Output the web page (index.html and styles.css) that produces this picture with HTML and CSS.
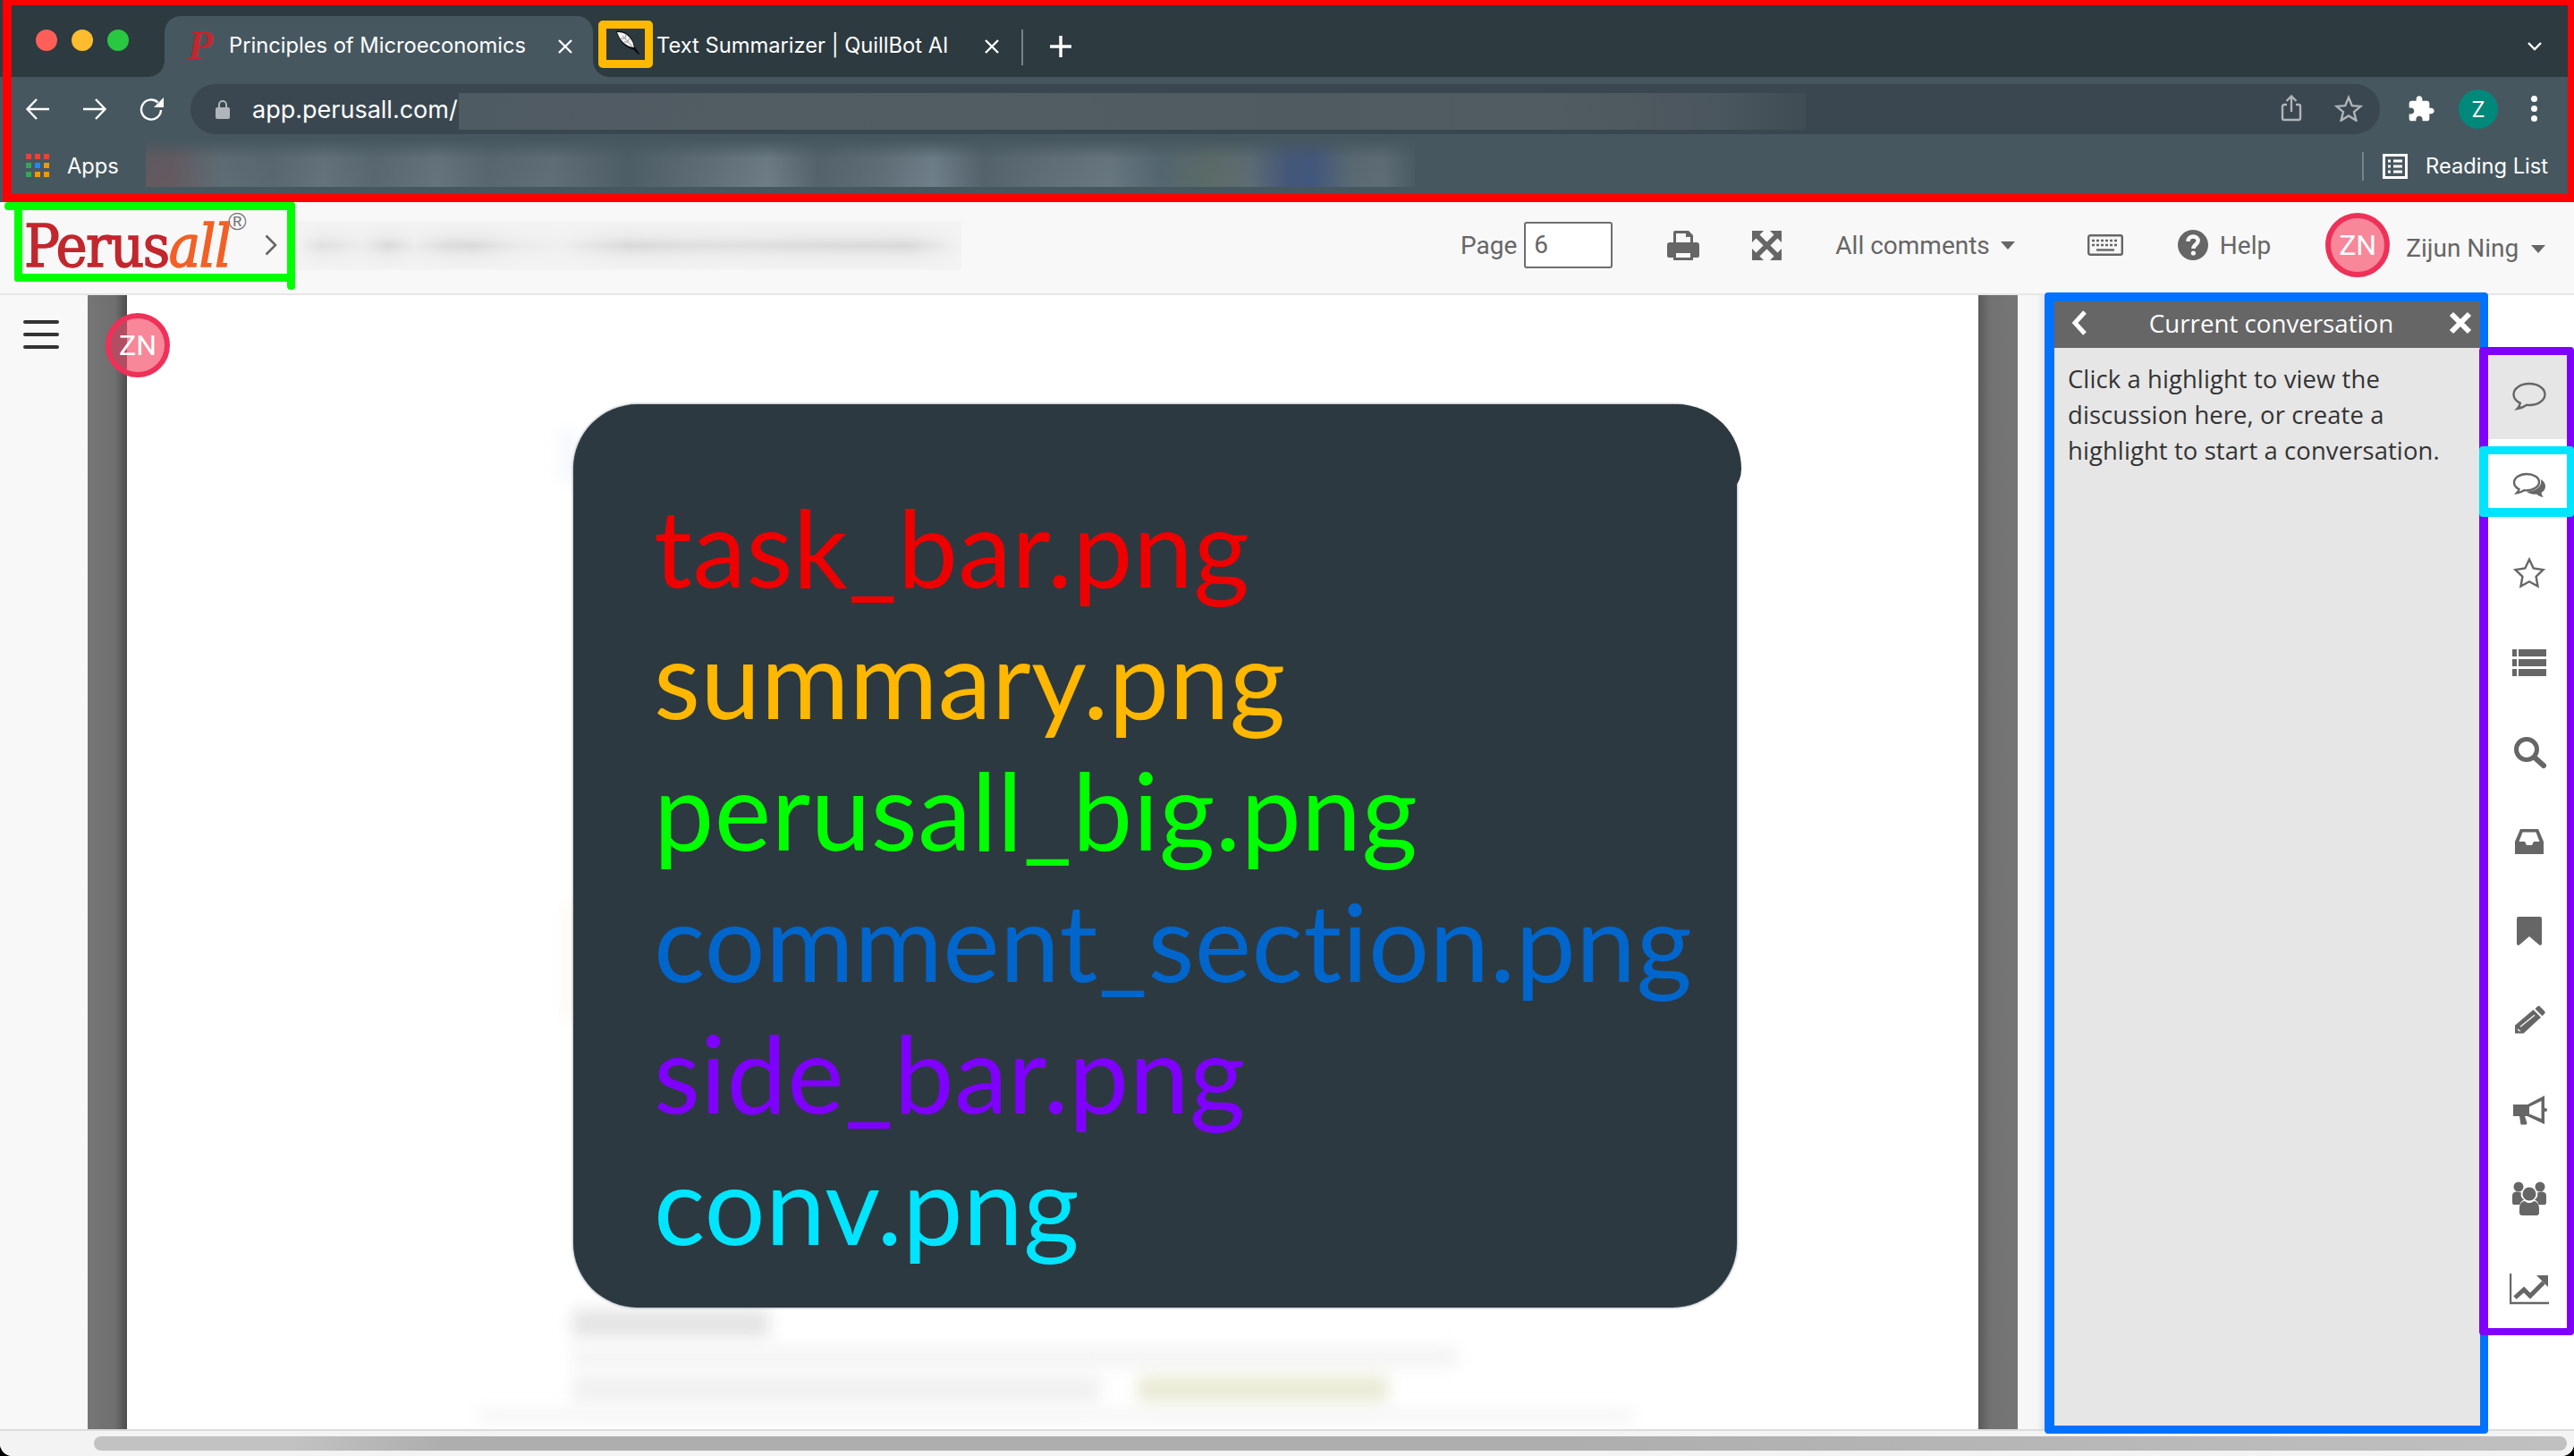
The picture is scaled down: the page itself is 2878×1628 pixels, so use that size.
FILE: index.html
```html
<!DOCTYPE html>
<html lang="en">
<head>
<meta charset="utf-8">
<title>Perusall</title>
<link rel="stylesheet" href="styles.css">
</head>
<body>
<div class="app">
  <header class="chrome">
    <div class="tabstrip">
      <div class="lights"><i class="light red"></i><i class="light amber"></i><i class="light green"></i></div>
      <div class="tab tab-active">
        <span class="fav-p">P</span>
        <span class="tab-title">Principles of Microeconomics</span>
        <svg class="tab-x" viewBox="0 0 16 16"><path d="M1 1l14 14M15 1L1 15"/></svg>
      </div>
      <div class="tab tab-idle">
        <svg class="fav-q" viewBox="0 0 28 28"><path class="q-dark" d="M1 1c9-1 16 4 19 12l2 6 5 7-1 1-6-6C11 20 4 11 1 1z"/><path class="q-light" d="M2 2c8-.5 14 4 17.500 11.500l1.500 5.500C12 18.500 5 11 2 2z"/><path class="q-cut" d="M8 6l11 12M12 5l-1 4M16 9l-2 3M6 9l4 0M10 13l4 0"/></svg>
        <span class="tab-title">Text Summarizer | QuillBot AI</span>
        <svg class="tab-x" viewBox="0 0 16 16"><path d="M1 1l14 14M15 1L1 15"/></svg>
      </div>
      <i class="tab-sep"></i>
      <svg class="plus" viewBox="0 0 24 24"><path d="M12 1v22M1 12h22"/></svg>
      <svg class="strip-more" viewBox="0 0 16 10"><path d="M1 1l7 7 7-7"/></svg>
    </div>
    <div class="toolbar">
      <div class="navrow">
        <svg class="nav nav-back" viewBox="0 0 28 26"><path d="M27 13H3M13 2L2.500 13 13 24"/></svg>
        <svg class="nav nav-fwd" viewBox="0 0 28 26"><path d="M1 13h24M15 2l10.500 11L15 24"/></svg>
        <svg class="nav nav-reload" viewBox="0 0 28 28"><path d="M24 15a11 11 0 1 1-3.500-8.500"/><path class="solid" d="M27 1v11H16z"/></svg>
        <div class="omnibox">
          <svg class="lock" viewBox="0 0 16 22"><path d="M3 9V6a5 5 0 0 1 10 0v3h1a2 2 0 0 1 2 2v9a2 2 0 0 1-2 2H2a2 2 0 0 1-2-2v-9a2 2 0 0 1 2-2zm2 0h6V6a3 3 0 0 0-6 0z"/></svg>
          <span class="url">app.perusall.com/</span>
          <i class="url-blur"></i>
          <svg class="omni-ico share" viewBox="0 0 24 30"><path d="M7 11H4a2 2 0 0 0-2 2v13a2 2 0 0 0 2 2h16a2 2 0 0 0 2-2V13a2 2 0 0 0-2-2h-3M12 19V2M6.500 7L12 1.500 17.500 7"/></svg>
          <svg class="omni-ico star" viewBox="0 0 32 30"><path d="M16 3l3.800 9.200 9.700.7-7.500 6.300 2.400 9.500-8.400-5.200-8.400 5.200 2.400-9.500-7.500-6.300 9.700-.7z"/></svg>
        </div>
        <svg class="puzzle" viewBox="0 0 24 24"><path d="M20.500 11H19V7c0-1.100-.9-2-2-2h-4V3.500C13 2.120 11.880 1 10.500 1S8 2.120 8 3.500V5H4c-1.100 0-1.990.9-1.990 2v3.800H3.500c1.490 0 2.700 1.210 2.700 2.700s-1.210 2.700-2.700 2.700H2V20c0 1.100.9 2 2 2h3.800v-1.500c0-1.490 1.210-2.700 2.700-2.700 1.490 0 2.700 1.210 2.700 2.700V22H17c1.100 0 2-.9 2-2v-4h1.500c1.380 0 2.500-1.120 2.500-2.500S21.880 11 20.500 11z"/></svg>
        <span class="profile">Z</span>
        <span class="kebab"><i></i><i></i><i></i></span>
      </div>
      <div class="bookmarks">
        <span class="apps-grid"><i class="c-r"></i><i class="c-r"></i><i class="c-r"></i><i class="c-g"></i><i class="c-b"></i><i class="c-o"></i><i class="c-g"></i><i class="c-o"></i><i class="c-o"></i></span>
        <span class="apps-label">Apps</span>
        <i class="bm-blur"></i>
        <i class="bm-sep"></i>
        <svg class="rl-ico" viewBox="0 0 28 28"><rect x="1.500" y="1.500" width="25" height="25"/><path d="M6 8h3M12 8h10M6 14h3M12 14h10M6 20h3M12 20h10"/></svg>
        <span class="rl-label">Reading List</span>
      </div>
    </div>
  </header>

  <div class="pagehead">
    <div class="logo"><span class="l-red">Perus</span><span class="l-orange">all</span><span class="l-reg">®</span></div>
    <svg class="logo-chev" viewBox="0 0 14 24"><path d="M1.500 1.500L12 12 1.500 22.500"/></svg>
    <i class="title-blur"></i>
    <span class="h-page">Page</span>
    <span class="h-input">6</span>
    <svg class="h-print" viewBox="0 0 36 33"><path d="M3 13h4V2a2 2 0 0 1 2-2h15l5 5v8h4a3 3 0 0 1 3 3v12a2 2 0 0 1-2 2h-5v3H7v-3H2a2 2 0 0 1-2-2V16a3 3 0 0 1 3-3zm7 0h16V7h-5V3H10zm0 12v5h16v-5z" fill-rule="evenodd"/></svg>
    <svg class="h-expand" viewBox="0 0 33 33"><path d="M0 0h13L0 13zM33 0v13L20 0zM0 33V20l13 13zM33 33H20l13-13z"/><path class="thick" d="M5 5l23 23M28 5L5 28"/></svg>
    <span class="h-comments">All comments</span><i class="caret"></i>
    <svg class="h-keys" viewBox="0 0 40 24"><rect x="1.200" y="1.200" width="37.600" height="21.600" rx="2"/><path d="M5 7h30M5 12h30" stroke-dasharray="3 2"/><path d="M10 17.500h20"/></svg>
    <svg class="h-help" viewBox="0 0 34 34"><circle cx="17" cy="17" r="17"/><path d="M11.500 13c0-3.500 2.500-5.500 5.700-5.500s5.500 2 5.500 4.800c0 4.200-5.300 4.200-5.300 8.700"/><circle class="dot" cx="17.400" cy="26" r="2.600"/></svg>
    <span class="h-helptext">Help</span>
    <span class="avatar h-avatar">ZN</span>
    <span class="h-name">Zijun Ning</span><i class="caret"></i>
  </div>

  <main class="workspace">
    <nav class="leftbar">
      <div class="burger"><i></i><i></i><i></i></div>
    </nav>
    <div class="gutter gutter-l"></div>
    <section class="doc">
      <span class="avatar doc-avatar">ZN</span>
      <i class="blur blur-a"></i>
      <i class="blur blur-b"></i>
      <div class="doc-foot">
        <i class="blur d-head"></i>
        <i class="blur d-line"></i>
        <div class="d-row"><i class="blur d-short"></i><i class="blur d-mark"></i></div>
        <i class="blur d-last"></i>
      </div>
    </section>
    <div class="gutter gutter-r"></div>
    <div class="gap"></div>
    <aside class="panel">
      <div class="panel-head">
        <svg class="p-back" viewBox="0 0 20 30"><path d="M16 3L5 15l11 12"/></svg>
        <span class="p-title">Current conversation</span>
        <svg class="p-close" viewBox="0 0 26 26"><path d="M3 3l20 20M23 3L3 23"/></svg>
      </div>
      <p class="panel-body">Click a highlight to view the<br>discussion here, or create a<br>highlight to start a conversation.</p>
    </aside>
    <div class="rail">
      <div class="rail-item rail-current"><svg class="ri ri-low" viewBox="0 0 40 40"><path class="ol" d="M20 5C10.300 5 2.500 10.400 2.500 17c0 4 2.800 7.500 7.300 9.700-.4 2.400-1.600 4.600-3.300 6.300 4.400-.6 8.200-2.400 10.700-4.200 1 .1 1.800.2 2.800.2 9.700 0 17.500-5.400 17.500-12S29.700 5 20 5z"/></svg></div>
      <div class="rail-item"><svg class="ri ri-low" viewBox="0 0 40 40"><path class="ol" d="M17 6C9.300 6 3 10.300 3 15.500c0 3 2.100 5.800 5.500 7.500-.3 1.500-1.100 3-2.300 4.200 3.300-.4 6-1.700 8-3 .9.100 1.800.2 2.800.2 7.700 0 14-4.300 14-9.400S24.700 6 17 6z"/><path d="M33 12c3 1.800 5 4.600 5 7.800 0 3-1.700 5.600-4.500 7.300.2 1.600 1.100 3.500 2.300 5-3-.6-5.700-2-7.600-3.600-4 .5-8.700-.4-11.200-3 9.500.4 17.800-5.200 16-13.500z"/></svg></div>
      <div class="rail-item"><svg class="ri" viewBox="0 0 40 40"><path class="ol" d="M20 4.500l4.700 10 10.800 1.500-7.900 7.600 1.900 10.900L20 29.300l-9.500 5.200 1.900-10.900-7.900-7.600 10.800-1.500z"/></svg></div>
      <div class="rail-item"><svg class="ri" viewBox="0 0 40 40"><path d="M1 5h5v8H1zM8 5h31v8H8zM1 16h5v8H1zM8 16h31v8H8zM1 27h5v8H1zM8 27h31v8H8z"/></svg></div>
      <div class="rail-item"><svg class="ri" viewBox="0 0 40 40"><circle class="ol thickol" cx="17" cy="17" r="11.500"/><path class="ol thickol round" d="M26 26l10 9"/></svg></div>
      <div class="rail-item"><svg class="ri" viewBox="0 0 40 40"><path fill-rule="evenodd" d="M10 6h20l6 14v14H4V20zm2.500 3.500L8.500 20H15l2 4h6l2-4h6.500l-4-10.500z"/></svg></div>
      <div class="rail-item"><svg class="ri" viewBox="0 0 40 40"><path d="M8 4h24a2 2 0 0 1 2 2v28c0 2-2 2.500-3 1.500L20 26 9 35.500C8 36.500 6 36 6 34V6a2 2 0 0 1 2-2z"/></svg></div>
      <div class="rail-item"><svg class="ri" viewBox="0 0 40 40"><path d="M29 4.500a2 2 0 0 1 3 0l5 5a2 2 0 0 1 0 3l-2.500 2.500-8-8zM24.500 8l8.500 8.500-19.500 18H4v-9z"/><path class="cutline" d="M10 27l16-13M7 30l3 2"/></svg></div>
      <div class="rail-item"><svg class="ri" viewBox="0 0 40 40"><path d="M2 14h16L37 4v32L18 27h-3l2.500 8-1 1.500h-6L9 27H2z"/><path class="cutfill" d="M20 16.500L33.500 10v20L20 24.500z"/><circle cx="38" cy="20" r="2"/></svg></div>
      <div class="rail-item"><svg class="ri" viewBox="0 0 40 40"><circle cx="8" cy="6" r="5.500"/><circle cx="32" cy="6" r="5.500"/><path d="M1 16c0-3 2-4.500 5-4.500l5 1c-1 3 0 6 3 8-2.500 1-4 3-4.500 5.500H3a2 2 0 0 1-2-2zM39 16c0-3-2-4.500-5-4.500l-5 1c1 3 0 6-3 8 2.500 1 4 3 4.500 5.500H37a2 2 0 0 0 2-2z"/><circle cx="20" cy="14" r="7.500"/><path d="M12 38a3 3 0 0 1-3-3v-5c0-5 3-8 6-8 1.500 1.500 3 2 5 2s3.500-.5 5-2c3 0 6 3 6 8v5a3 3 0 0 1-3 3z"/></svg></div>
      <div class="rail-item"><svg class="ri ri-wide" viewBox="0 0 44 36"><path class="ol" d="M1 1v33h43"/><path class="ol zig" d="M6 28l10-9 7 7 15-15"/><path d="M30 3h13v13z"/></svg></div>
    </div>
  </main>

  <div class="hscroll"><div class="hthumb"></div></div>

  <div class="card">
    <p class="c-line c1">task_bar.png</p>
    <p class="c-line c2">summary.png</p>
    <p class="c-line c3">perusall_big.png</p>
    <p class="c-line c4">comment_section.png</p>
    <p class="c-line c5">side_bar.png</p>
    <p class="c-line c6">conv.png</p>
  </div>

  <div class="mark m-red"></div>
  <div class="mark m-yellow"></div>
  <div class="mark m-green"></div>
  <div class="mark m-blue"></div>
  <div class="mark m-purple"></div>
  <div class="mark m-cyan"></div>
</div>
</body>
</html>
```
FILE: styles.css
```css
* { box-sizing: border-box; }
html, body { margin: 0; padding: 0; height: 100%; background: #000; overflow: hidden; }
i { display: block; font-style: normal; }
p { margin: 0; }
svg { display: block; flex: none; }

.app {
  position: relative;
  width: 2878px;
  height: 1628px;
  display: flex;
  flex-direction: column;
  background: #f8f8f8;
  border-radius: 0 0 14px 14px;
  overflow: hidden;
  font-family: "Inter", "Liberation Sans", sans-serif;
}

/* Browser chrome */
.chrome { height: 226px; flex: none; background: #46575f; display: flex; flex-direction: column; }
.tabstrip { height: 86px; flex: none; background: #2d3a40; display: flex; align-items: flex-end; position: relative; }
.lights { display: flex; gap: 16px; margin-left: 40px; width: 144px; align-self: flex-start; padding-top: 33px; }
.light { width: 24px; height: 24px; border-radius: 50%; }
.light.red { background: #ff5f57; }
.light.amber { background: #febc2e; }
.light.green { background: #28c840; }
.tab { height: 68px; width: 479px; display: flex; align-items: center; position: relative; color: #fff; font-size: 23.700px; }
.tab-active { background: #46575f; border-radius: 18px 18px 0 0; padding-left: 26px; }
.tab-active::before, .tab-active::after { content: ""; position: absolute; bottom: 0; width: 18px; height: 18px; }
.tab-active::before { left: -18px; background: radial-gradient(circle at 0 0, #2d3a40 17.500px, #46575f 18px); }
.tab-active::after { right: -18px; background: radial-gradient(circle at 100% 0, #2d3a40 17.500px, #46575f 18px); }
.tab-idle { padding-left: 25px; }
.fav-p { font-family: "Liberation Serif", serif; font-weight: 700; font-style: italic; font-size: 46px; line-height: 1; color: #c1272d; width: 46px; padding-bottom: 2px; }
.fav-q { width: 28px; height: 28px; margin-right: 18px; margin-top: -8px; }
.q-dark { fill: #0a0a0a; }
.q-light { fill: #f2f2f2; }
.q-cut { fill: none; stroke: #555; stroke-width: .6; }
.tab-title { white-space: nowrap; margin-top: -4px; }
.tab-x { width: 16px; height: 16px; position: absolute; left: 440px; top: 26px; fill: none; stroke: #fff; stroke-width: 2.400; }
.tab-idle .tab-x { left: 438px; }
.tab-sep { width: 2px; height: 40px; background: #76848b; margin-bottom: 13px; }
.plus { width: 26px; height: 26px; margin: 0 0 21px 29px; fill: none; stroke: #fff; stroke-width: 3.200; }
.strip-more { width: 16px; height: 10px; margin: 0 0 29px auto; position: relative; left: -36px; fill: none; stroke: #fff; stroke-width: 2.400; }

.toolbar { flex: 1; display: flex; flex-direction: column; }
.navrow { height: 70px; flex: none; display: flex; align-items: flex-start; padding-top: 8px; position: relative; }
.nav { width: 28px; height: 26px; margin-top: 15px; fill: none; stroke: #fff; stroke-width: 2.400; }
.nav .solid { fill: #fff; stroke: none; }
.nav-back { margin-left: 28px; }
.nav-fwd { margin-left: 36px; }
.nav-reload { margin-left: 36px; height: 28px; margin-top: 14px; }
.omnibox { width: 2448px; height: 56px; margin-left: 29px; background: #3a4750; border-radius: 28px; display: flex; align-items: center; position: relative; color: #fff; }
.lock { width: 16px; height: 22px; margin-left: 28px; fill: #b0b5b9; }
.url { font-size: 27px; margin-left: 25px; white-space: nowrap; }
.url-blur { position: absolute; left: 300px; top: 10px; width: 1506px; height: 41px; background: linear-gradient(90deg, #4f5b62 0, #525d63 40%, #4f5a61 62%, #515c62 80%, #4a565d 94%, #3f4c54 100%); }
.omni-ico { position: absolute; fill: none; stroke: #b0b5b9; stroke-width: 2.400; }
.share { width: 24px; height: 30px; left: 2337px; top: 12px; }
.star { width: 32px; height: 30px; left: 2397px; top: 12px; }
.puzzle { width: 32px; height: 32px; margin: 12px 0 0 30px; fill: #fff; }
.profile { width: 44px; height: 44px; margin: 6px 0 0 26px; border-radius: 50%; background: #00897b; color: #fff; font-size: 24px; display: flex; align-items: center; justify-content: center; }
.kebab { display: flex; flex-direction: column; gap: 4px; margin: 13px 0 0 37px; }
.kebab i { width: 7px; height: 7px; border-radius: 50%; background: #fff; }

.bookmarks { flex: 1; display: flex; align-items: flex-start; color: #fff; font-size: 23.700px; }
.apps-grid { display: grid; grid-template-columns: repeat(3, 6px); gap: 4px; margin: 16px 0 0 29px; }
.apps-grid i { width: 6px; height: 6px; }
.c-r { background: #ea4335; }
.c-g { background: #34a853; }
.c-b { background: #1a8cff; }
.c-o { background: #f29900; }
.apps-label { margin: 15px 0 0 20px; width: 88px; }
.bm-blur { width: 1419px; height: 53px; background: linear-gradient(180deg, #46575f 0, rgba(70, 87, 95, .1) 40%, rgba(70, 87, 95, 0) 100%), linear-gradient(90deg, #625a60 0, #655a60 2%, #5f6d75 6%, #5a6871 10%, #65747c 14%, #596871 18%, #66757d 23%, #586770 27%, #606f78 32%, #4e5e67 38%, #5f6e77 44%, #6e7d86 49%, #54636c 53%, #616f78 58%, #70808a 62%, #54636c 66%, #616f78 71%, #687780 76%, #546670 80%, #5d6c68 84%, #5e6c74 87%, #44577a 90%, #42577e 92%, #5a6a73 95%, #5f6e76 97.500%, #4a5b64 100%); }
.bm-sep { width: 2px; height: 32px; background: #76848b; margin: 14px 0 0 1059px; }
.rl-ico { width: 28px; height: 28px; margin: 16px 0 0 21px; fill: none; stroke: #fff; stroke-width: 3; }
.rl-label { margin: 15px 0 0 20px; white-space: nowrap; }

/* App header */
.pagehead { height: 104px; flex: none; background: #f8f8f8; border-bottom: 2px solid #e7e7e7; padding-bottom: 6px; display: flex; align-items: center; color: #666; font-family: "Roboto", "Liberation Sans", sans-serif; font-size: 28px; }
.logo { margin-left: 27px; width: 260px; padding-top: 3px; font-family: "DejaVu Serif", serif; font-stretch: condensed; font-size: 66px; letter-spacing: -1.500px; line-height: 1; position: relative; white-space: nowrap; -webkit-text-stroke: 1.400px; }
.l-red { color: #c1272d; }
.l-orange { color: #f26026; font-style: italic; }
.l-reg { position: absolute; left: 228px; top: -6px; font-size: 28px; color: #777; letter-spacing: 0; -webkit-text-stroke: 0; font-family: "Liberation Sans", sans-serif; }
.logo-chev { width: 14px; height: 24px; margin-left: 9px; fill: none; stroke: #666; stroke-width: 2.600; }
.title-blur { width: 745px; height: 55px; margin-left: 20px; background: linear-gradient(180deg, #f3f3f3 0, rgba(243, 243, 243, .7) 30%, rgba(243, 243, 243, 0) 50%, rgba(243, 243, 243, .7) 72%, #f3f3f3 100%), linear-gradient(90deg, #f4f4f4 0, #e0e0e0 4%, #ececec 10%, #dadada 14%, #ececec 18%, #dcdcdc 23%, #dadada 27%, #eaeaea 33%, #efefef 40%, #d9d9d9 50%, #dedede 58%, #e0e0e0 66%, #dcdcdc 76%, #d9d9d9 92%, #f3f3f3 100%); }
.h-page { margin-left: 558px; }
.h-input { width: 99px; height: 52px; margin-left: 8px; padding-left: 9px; border: 2px solid #6e6e6e; border-radius: 3px; background: #fff; line-height: 47px; }
.h-print { width: 36px; height: 33px; margin-left: 61px; fill: #666; }
.h-expand { width: 33px; height: 33px; margin-left: 59px; fill: #666; }
.h-expand .thick { fill: none; stroke: #666; stroke-width: 5.500; }
.h-comments { margin-left: 60px; white-space: nowrap; }
.caret { width: 0; height: 0; border-left: 8px solid transparent; border-right: 8px solid transparent; border-top: 9px solid #666; margin-left: 12px; }
.h-keys { width: 40px; height: 24px; margin-left: 81px; fill: none; stroke: #666; stroke-width: 2.400; }
.h-help { width: 34px; height: 34px; margin-left: 61px; fill: #666; }
.h-help path { fill: none; stroke: #f8f8f8; stroke-width: 4.500; }
.h-help .dot { fill: #f8f8f8; }
.h-helptext { margin-left: 13px; }
.avatar { border-radius: 50%; border: 6px solid #ee3158; background: #f78799; color: #fff; display: flex; align-items: center; justify-content: center; font-family: "Roboto", sans-serif; }
.h-avatar { width: 72px; height: 72px; margin-left: 61px; font-size: 32px; }
.h-name { margin-left: 18px; white-space: nowrap; position: relative; top: 3px; }
.h-name + .caret { position: relative; top: 4px; margin-left: 14px; }

/* Workspace */
.workspace { flex: 1; min-height: 0; display: flex; }
.leftbar { width: 98px; flex: none; background: #f8f8f8; padding: 28px 0 0 26px; }
.burger { width: 40px; display: flex; flex-direction: column; gap: 10px; }
.burger i { height: 4px; border-radius: 2px; background: #333; }
.gutter { flex: none; background: linear-gradient(90deg, #767676 0, #6f6f6f 70%, #4d4d4d 100%); }
.gutter-l { width: 44px; }
.gutter-r { width: 44px; background: linear-gradient(90deg, #5a5a5a 0, #727272 30%, #767676 100%); }
.doc { width: 2070px; flex: none; background: #fff; position: relative; display: flex; flex-direction: column; justify-content: flex-end; }
.doc-avatar { position: absolute; left: -24px; top: 20px; width: 72px; height: 72px; font-size: 32px; background: linear-gradient(90deg, #b24e62 0, #b24e62 18px, #f78799 18px); }
.blur { filter: blur(9px); }
.blur-a { position: absolute; left: 488px; top: 150px; width: 12px; height: 60px; background: #eef3fa; }
.blur-b { position: absolute; left: 490px; top: 680px; width: 10px; height: 130px; background: #f7f5e8; }
.doc-foot { padding: 0 0 10px 498px; display: flex; flex-direction: column; gap: 10px; }
.d-head { width: 220px; height: 32px; background: #e4e4e4; }
.d-line { width: 990px; height: 22px; background: #f3f3f3; }
.d-row { display: flex; gap: 42px; }
.d-short { width: 590px; height: 30px; background: #f0f0f0; }
.d-mark { width: 280px; height: 30px; background: #e9ead4; }
.d-last { width: 1290px; height: 10px; margin-left: -105px; background: #f0f0f0; }
.gap { width: 30px; flex: none; background: linear-gradient(90deg, #f8f8f8 0, #f6f6f6 70%, #e6e6e6 100%); }
.panel { width: 496px; flex: none; padding: 7px 9px 4px 11px; display: flex; flex-direction: column; }
.panel-head { height: 52px; flex: none; background: #666; color: #fff; display: flex; align-items: center; justify-content: space-between; padding: 0 9px 5px 18px; font-size: 27.700px; font-family: "Open Sans", sans-serif; }
.p-title { position: relative; left: 3px; }
.p-back { width: 20px; height: 30px; fill: none; stroke: #fff; stroke-width: 5; }
.p-close { width: 26px; height: 26px; fill: none; stroke: #fff; stroke-width: 6; }
.panel-body { flex: 1; background: #e6e6e6; color: #333; font-family: "Open Sans", sans-serif; font-size: 27.400px; letter-spacing: .12px; line-height: 40px; padding: 15px 0 0 15px; white-space: nowrap; }
.rail { width: 96px; flex: none; background: #fff; padding-top: 61px; display: flex; flex-direction: column; }
.rail-item { height: 100px; flex: none; display: flex; align-items: center; justify-content: center; padding-right: 4px; fill: #666; }
.rail-current { background: #e6e6e6; }
.ri { width: 40px; height: 40px; }
.ri-low { margin-top: 5px; }
.ri-wide { width: 44px; height: 36px; }
.ol { fill: none; stroke: #666; stroke-width: 2.400; }
.thickol { stroke-width: 5; }
.round { stroke-linecap: round; stroke-width: 6; }
.zig { stroke-width: 5; }
.cutline { fill: none; stroke: #fff; stroke-width: 1.200; }
.cutfill { fill: #fff; }

/* Scrollbar */
.hscroll { height: 30px; flex: none; background: #f3f3f3; border-top: 2px solid #dcdcdc; padding: 6px 8px 0 105px; }
.hthumb { height: 16px; border-radius: 8px; background: linear-gradient(90deg, #c2c2c2 0, #c2c2c2 8%, #aeaeae 14%, #aeaeae 60%, #c0c0c0 100%); }

/* Overlay legend */
.card { position: absolute; left: 641px; top: 452px; width: 1301px; height: 1010px; background: #2d3940; border-radius: 72px; box-shadow: 0 0 3px rgba(70, 85, 95, .8); padding: 86px 0 0 90px; font-family: "Lato", sans-serif; font-variant-ligatures: none; font-size: 120px; letter-spacing: .4px; }
.card::before { content: ""; position: absolute; right: -5px; top: 0; width: 90px; height: 103px; background: #2d3940; border-radius: 0 72px 30px 0; }
.c-line { height: 147px; line-height: 147px; white-space: nowrap; position: relative; }
.c1 { color: #ee0000; }
.c2 { color: #ffb700; }
.c3 { color: #00ff00; }
.c4 { color: #0066cc; }
.c5 { color: #7f00ff; }
.c6 { color: #00e5ff; }

.mark { position: absolute; border-style: solid; }
.m-red { left: 3px; top: 0; width: 2875px; height: 226px; border-color: #ff0000; border-width: 6px 7px 9px 10px; }
.m-yellow { left: 669px; top: 23px; width: 61px; height: 53px; border: 9px solid #ffb900; border-radius: 5px; }
.m-green { left: 16px; top: 226px; width: 314px; height: 89px; border: 9px solid #00ff00; border-radius: 0 3px 3px 3px; }
.m-green::before { content: ""; position: absolute; left: -20px; top: -9px; width: 22px; height: 9px; border-radius: 4px; background: #00ff00; }
.m-green::after { content: ""; position: absolute; right: -9px; bottom: -18px; width: 9px; height: 18px; border-radius: 0 0 4px 4px; background: #00ff00; }
.m-blue { left: 2286px; top: 327px; width: 496px; height: 1276px; border-color: #0072ff; border-width: 10px 9px 9px 11px; border-radius: 4px; }
.m-purple { left: 2772px; top: 388px; width: 106px; height: 1105px; border-color: #7f00ff; border-width: 9px 8px 8px 10px; border-radius: 4px; }
.m-cyan { left: 2772px; top: 499px; width: 106px; height: 79px; border-color: #00e5ff; border-width: 9px 8px 10px 10px; border-radius: 4px; }
```
